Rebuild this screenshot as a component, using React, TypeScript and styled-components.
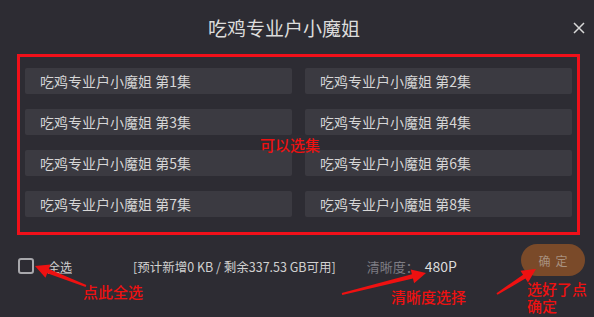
import React from "react";
import styled, { createGlobalStyle } from "styled-components";

const Global = createGlobalStyle`
  html, body { margin: 0; padding: 0; background: #2d2c33; }
  body { font-family: "Noto Sans CJK SC", "Noto Sans", sans-serif; }
  #root { width: 594px; height: 317px; }
`;

const Dialog = styled.div`
  position: relative;
  width: 594px;
  height: 317px;
  background: #2d2c33;
  overflow: hidden;
  display: flex;
  flex-direction: column;
`;

const Header = styled.div`
  height: 42px;
  padding-top: 6px;
  display: flex;
  align-items: center;
  justify-content: center;
  position: relative;
`;

const Title = styled.div`
  font-size: 19px;
  color: #dcdcdc;
  margin-right: 26px;
`;

const Close = styled.div`
  position: absolute;
  right: 8px;
  top: 21px;
  width: 14px;
  height: 14px;
  display: flex;
  align-items: center;
  justify-content: center;
`;

const Highlight = styled.div`
  margin: 6px 14px 0 17px;
  border: 3px solid #f0101a;
  padding: 11px 5px 15px 5px;
  display: grid;
  grid-template-columns: 1fr 1fr;
  column-gap: 13px;
  row-gap: 15px;
`;

const Episode = styled.div`
  height: 26px;
  background: #3b3a41;
  border-radius: 2px;
  display: flex;
  align-items: center;
  padding-left: 15px;
  font-size: 14px;
  color: #d6d6d6;
`;

const Footer = styled.div`
  height: 62px;
  display: flex;
  align-items: center;
  padding: 0 9px 0 18px;
`;

const Check = styled.div`
  width: 12px;
  height: 12px;
  border: 2px solid #a8a8ac;
  border-radius: 3px;
  margin-right: 14px;
`;

const SelectAll = styled.span`
  font-size: 12px;
  color: #d0d0d0;
  text-decoration: underline;
  text-decoration-color: #8a8a8e;
  margin-right: 61px;
`;

const Info = styled.span`
  font-size: 12.5px;
  color: #d0d0d0;
  margin-right: 31px;
`;

const Label = styled.span<{ $dim?: boolean }>`
  font-size: ${(p) => (p.$dim ? "13px" : "14px")};
  color: ${(p) => (p.$dim ? "#7e7d84" : "#dcdcdc")};
  margin-right: ${(p) => (p.$dim ? "6px" : "0")};
`;

const Confirm = styled.div`
  margin-left: auto;
  margin-bottom: 12px;
  width: 64px;
  height: 32px;
  border-radius: 16px;
  background: #7a4a29;
  color: #a8917f;
  font-size: 12px;
  display: flex;
  align-items: center;
  justify-content: center;
  letter-spacing: 5px;
  padding-left: 5px;
  box-sizing: border-box;
`;

const Note = styled.div<{ $x: number; $y: number }>`
  position: absolute;
  left: ${(p) => p.$x}px;
  top: ${(p) => p.$y}px;
  color: #ee1111;
  font-size: 15px;
  line-height: 17px;
  font-weight: 500;
  white-space: pre;
`;

const Overlay = styled.svg`
  position: absolute;
  left: 0;
  top: 0;
  pointer-events: none;
`;

const episodes = Array.from({ length: 8 }, (_, i) => `吃鸡专业户小魔姐 第${i + 1}集`);

function Arrow({ x1, y1, x2, y2 }: { x1: number; y1: number; x2: number; y2: number }) {
  const dx = x2 - x1;
  const dy = y2 - y1;
  const len = Math.hypot(dx, dy);
  const ux = dx / len;
  const uy = dy / len;
  const px = -uy;
  const py = ux;
  const headLen = 14;
  const headW = 7;
  const bx = x2 - ux * headLen;
  const by = y2 - uy * headLen;
  const tail = 1;
  const shaft = 2.2;
  const pts = [
    [x1 + px * tail, y1 + py * tail],
    [bx + px * shaft, by + py * shaft],
    [bx + px * headW, by + py * headW],
    [x2, y2],
    [bx - px * headW, by - py * headW],
    [bx - px * shaft, by - py * shaft],
    [x1 - px * tail, y1 - py * tail],
  ]
    .map((p) => p.join(","))
    .join(" ");
  return <polygon points={pts} fill="#ee1111" />;
}

export default function App() {
  return (
    <>
      <Global />
      <Dialog>
        <Header>
          <Title>吃鸡专业户小魔姐</Title>
          <Close>
            <svg width="12" height="12" viewBox="0 0 12 12">
              <path d="M1 1L11 11M11 1L1 11" stroke="#d8d8d8" strokeWidth="1.5" />
            </svg>
          </Close>
        </Header>
        <Highlight>
          {episodes.map((e) => (
            <Episode key={e}>{e}</Episode>
          ))}
        </Highlight>
        <Footer>
          <Check />
          <SelectAll>全选</SelectAll>
          <Info>[预计新增0 KB / 剩余337.53 GB可用]</Info>
          <Label $dim>清晰度：</Label>
          <Label>480P</Label>
          <Confirm>确定</Confirm>
        </Footer>
        <Note $x={260} $y={136}>可以选集</Note>
        <Note $x={83} $y={283}>点此全选</Note>
        <Note $x={391} $y={288}>清晰度选择</Note>
        <Note $x={527} $y={280}>{"选好了点\n确定"}</Note>
        <Overlay width="594" height="317" viewBox="0 0 594 317">
          <Arrow x1={86} y1={286} x2={35} y2={266} />
          <Arrow x1={342} y1={294} x2={426} y2={273} />
          <Arrow x1={497} y1={294} x2={536} y2={269} />
        </Overlay>
      </Dialog>
    </>
  );
}
